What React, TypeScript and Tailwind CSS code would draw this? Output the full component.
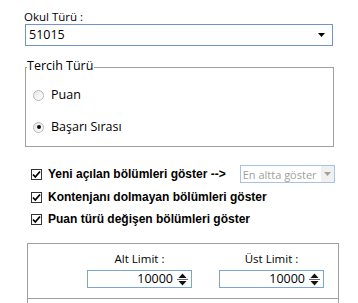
import React from "react";

const ui = { fontFamily: '"Open Sans", "Noto Sans", sans-serif' };
const bold = { fontFamily: '"Liberation Sans", Arial, sans-serif' };

function Radio({ checked }: { checked?: boolean }) {
  return (
    <span className="relative flex h-[11px] w-[11px] items-center justify-center rounded-full border border-[#b8b8b8] bg-gradient-to-br from-[#e8e8e8] to-white">
      {checked && <span className="h-[4px] w-[4px] rounded-full bg-[#111]" />}
    </span>
  );
}

function Check() {
  return (
    <span className="flex h-[11px] w-[11px] shrink-0 items-center justify-center border border-[#333] bg-white">
      <svg width="9" height="9" viewBox="0 0 9 9">
        <path d="M1 4.5 L3.3 7 L8 1.5" stroke="#000" strokeWidth="1.8" fill="none" />
      </svg>
    </span>
  );
}

function Spin({ value }: { value: string }) {
  return (
    <div className="flex h-[18px] w-[105px] items-center border border-[#7aa4d6] bg-white">
      <span className="flex-1 pr-[2px] text-right text-[12.5px] leading-none text-black" style={ui}>
        {value}
      </span>
      <div className="mr-[2px] flex h-[14px] w-[14px] flex-col items-center justify-center gap-[1px]">
        <svg width="9" height="5" viewBox="0 0 9 5">
          <path d="M0.5 5 L4.5 0.5 L8.5 5 Z" fill="#111" />
        </svg>
        <span className="h-px w-[11px] bg-[#666]" />
        <svg width="9" height="5" viewBox="0 0 9 5">
          <path d="M0.5 0 L4.5 4.5 L8.5 0 Z" fill="#111" />
        </svg>
      </div>
    </div>
  );
}

export default function App() {
  return (
    <div className="h-[303px] w-[358px] overflow-hidden bg-white text-black" style={ui}>
      <div className="pl-[24px] pt-[10px] text-[11.5px] leading-[14px]">Okul Türü :</div>
      <div className="ml-[25px] flex h-[22px] w-[308px] items-center border border-[#6f95c8] bg-white">
        <span className="flex-1 pl-[3px] text-[12.5px] leading-none">51015</span>
        <svg width="7" height="4" viewBox="0 0 7 4" className="mr-[7px]">
          <path d="M0 0 L7 0 L3.5 4 Z" fill="#000" />
        </svg>
      </div>

      <div className="relative ml-[25px] mt-[21px] h-[80px] w-[309px] border border-[#a0a0a0]">
        <span className="absolute -top-[10px] left-[1px] bg-white pr-[1px] text-[12.5px] leading-[16px]">
          Tercih Türü
        </span>
        <div className="flex flex-col pl-[7px] pt-[19px]">
          <div className="flex h-[16px] items-center gap-[7px] text-[12.5px]">
            <Radio />
            <span>Puan</span>
          </div>
          <div className="mt-[16px] flex h-[16px] items-center gap-[7px] text-[12.5px]">
            <Radio checked />
            <span>Başarı Sırası</span>
          </div>
        </div>
      </div>

      <div className="ml-[31px] mt-[18px] flex flex-col text-[12px] font-bold" style={bold}>
        <div className="flex h-[18px] items-center whitespace-nowrap">
          <Check />
          <span className="ml-[6px]">Yeni açılan bölümleri göster --&gt;</span>
          <div className="ml-[14px] flex h-[18px] w-[95px] shrink-0 items-center overflow-hidden border border-[#a8c2e2] bg-white font-normal" style={ui}>
            <span className="flex-1 whitespace-nowrap pl-[2px] text-[11px] leading-none text-[#a0a0a0]">En altta göster</span>
            <div className="flex h-[16px] w-[13px] shrink-0 items-center justify-center bg-[#f0f0f0]">
              <svg width="7" height="4" viewBox="0 0 7 4">
                <path d="M0 0 L7 0 L3.5 4 Z" fill="#a0a0a0" />
              </svg>
            </div>
          </div>
        </div>
        <div className="mt-[5px] flex h-[18px] items-center whitespace-nowrap">
          <Check />
          <span className="ml-[6px]">Kontenjanı dolmayan bölümleri göster</span>
        </div>
        <div className="mt-[4px] flex h-[18px] items-center whitespace-nowrap">
          <Check />
          <span className="ml-[6px]">Puan türü değişen bölümleri göster</span>
        </div>
      </div>

      <div className="ml-[27px] mt-[15px] h-[70px] w-[312px] border border-[#a0a0a0]">
        <div className="flex h-[55px] gap-[27px] border-b border-[#a0a0a0] pl-[59px] pt-[8px]">
          <div className="flex flex-col items-center">
            <span className="text-[11.5px] leading-[14px]">Alt Limit :</span>
            <div className="mt-[4px]">
              <Spin value="10000" />
            </div>
          </div>
          <div className="flex flex-col items-center">
            <span className="text-[11.5px] leading-[14px]">Üst Limit :</span>
            <div className="mt-[4px]">
              <Spin value="10000" />
            </div>
          </div>
        </div>
      </div>
    </div>
  );
}
